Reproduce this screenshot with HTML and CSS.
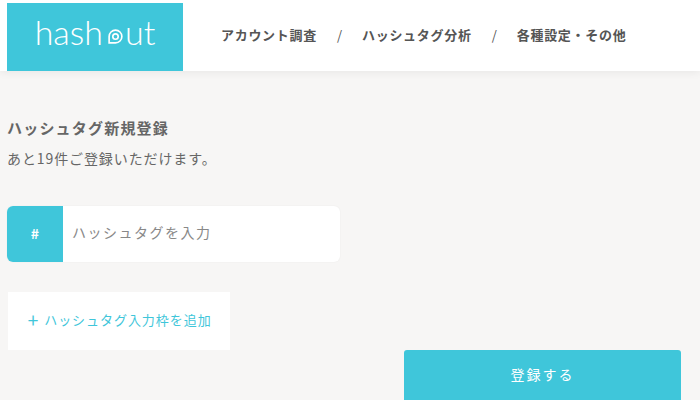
FILE: index.html
```html
<!DOCTYPE html>
<html lang="ja">

<head>
    <meta charset="UTF-8" />
    <meta name="viewport" content="width=device-width, initial-scale=1.0" />
    <title>ハッシュタグ新規登録 | hashout</title>
    <link rel="stylesheet" href="styles.css">
</head>

<body>
    <header class="site-header">
        <a href="#" class="logo">
            <span>hash</span>
            <!-- the "o" of the logo is a small speech bubble -->
            <svg class="logo-mark" viewBox="0 0 20 20" width="15" height="15" aria-hidden="true">
                <path d="M10 1.5a8.5 8.5 0 1 1 0 17H1.5V10A8.5 8.5 0 0 1 10 1.5z" fill="none" stroke="#fff" stroke-width="2.2" />
                <circle cx="10" cy="10" r="3.6" fill="none" stroke="#fff" stroke-width="2.2" />
            </svg>
            <span>ut</span>
        </a>
        <nav class="main-nav">
            <a href="#">アカウント調査</a>
            <span class="sep">/</span>
            <a href="#">ハッシュタグ分析</a>
            <span class="sep">/</span>
            <a href="#">各種設定・その他</a>
        </nav>
    </header>

    <main class="content">
        <h1>ハッシュタグ新規登録</h1>
        <p class="remaining">あと19件ご登録いただけます。</p>

        <div class="tag-input">
            <span class="tag-mark">#</span>
            <input type="text" placeholder="ハッシュタグを入力" />
        </div>

        <button class="add-btn" type="button"><span class="plus">＋</span> ハッシュタグ入力枠を追加</button>

        <div class="submit-row">
            <button class="submit-btn" type="submit">登録する</button>
        </div>
    </main>
</body>

</html>
```

FILE: styles.css
```css
* {
    margin: 0;
    padding: 0;
    box-sizing: border-box;
}

body {
    background-color: #f7f6f5;
    font-family: "Noto Sans CJK JP", "Noto Sans", sans-serif;
    color: #666;
}

.site-header {
    display: flex;
    align-items: center;
    height: 71px;
    background-color: #fff;
    box-shadow: 0 2px 8px rgba(0, 0, 0, 0.06);
}

.logo {
    display: flex;
    align-items: center;
    justify-content: center;
    width: 176px;
    height: 68px;
    margin: 3px 0 0 7px;
    padding-bottom: 12px;
    background-color: #3fc6da;
    color: #fff;
    font-family: "Lato", sans-serif;
    font-weight: 300;
    font-size: 34px;
    text-decoration: none;
}

.logo-mark {
    margin: 11px 2px 0 5px;
}

.main-nav {
    display: flex;
    align-items: center;
    gap: 20px;
    margin: -2px 0 0 38px;
    font-size: 13px;
    font-weight: 700;
    letter-spacing: 0.7px;
    color: #555;
}

.main-nav a {
    color: inherit;
    text-decoration: none;
}

.sep {
    font-weight: 400;
    letter-spacing: 0;
}

.content {
    padding: 46px 19px 0 7px;
}

h1 {
    font-size: 15px;
    font-weight: 700;
    letter-spacing: 1.2px;
    line-height: 22px;
}

.remaining {
    margin-top: 8px;
    font-size: 14px;
    line-height: 22px;
    letter-spacing: 0.9px;
}

.tag-input {
    display: flex;
    width: 333px;
    height: 56px;
    margin-top: 37px;
    background-color: #fff;
    border-radius: 6px;
    overflow: hidden;
    box-shadow: 0 0 2px rgba(0, 0, 0, 0.06);
}

.tag-mark {
    display: flex;
    align-items: center;
    justify-content: center;
    width: 56px;
    padding-bottom: 2px;
    background-color: #3fc6da;
    color: #fff;
    font-size: 14px;
    font-weight: 700;
}

.tag-input input {
    flex: 1;
    padding: 0 0 5px 9px;
    border: none;
    outline: none;
    background: none;
    font-family: inherit;
    font-size: 14px;
    letter-spacing: 1.5px;
}

.tag-input input::placeholder {
    color: #888;
}

.add-btn {
    display: block;
    width: 222px;
    height: 58px;
    margin: 30px 0 0 1px;
    padding-bottom: 4px;
    border: none;
    background-color: #fff;
    color: #3fc6da;
    font-family: inherit;
    font-size: 13px;
    letter-spacing: 0.95px;
}

.plus {
    font-weight: 700;
}

.submit-row {
    display: flex;
    justify-content: flex-end;
}

.submit-btn {
    width: 277px;
    height: 50px;
    padding-bottom: 2px;
    border: none;
    border-radius: 3px 3px 0 0;
    background-color: #3fc6da;
    color: #fff;
    font-family: inherit;
    font-size: 14px;
    letter-spacing: 2px;
}
```
